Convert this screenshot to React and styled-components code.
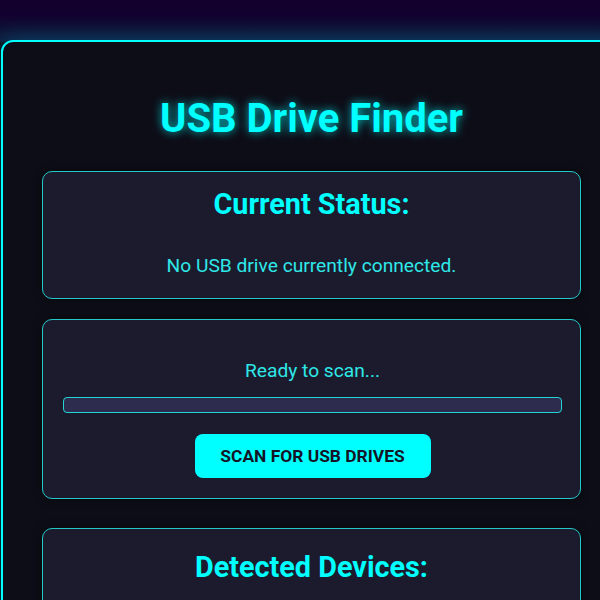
import React from "react";
import styled, { createGlobalStyle } from "styled-components";

const Global = createGlobalStyle`
  html, body {
    margin: 0;
    padding: 0;
    background: #0d0d17;
    font-family: Roboto, "Liberation Sans", sans-serif;
  }
  body { overflow: hidden; }
  * { box-sizing: border-box; }
`;

const Page = styled.div`
  width: 100%;
  min-height: 600px;
  overflow: hidden;
  padding: 40px 0 0 1px;
  background: linear-gradient(180deg, #14002a 0px, #120030 14px, #0e1638 34px, #0c1a3c 42px, #0d0d17 42px);
`;

const Container = styled.main`
  width: 621px;
  min-height: 620px;
  padding: 14px 39px 39px;
  border: 2px solid #00ffff;
  border-radius: 12px;
  background: #0d0d17;
  box-shadow: 0 0 22px rgba(0, 210, 255, 0.25);
`;

const Title = styled.h1`
  margin: 39px 0 29px;
  text-align: center;
  font-size: 40px;
  font-weight: 700;
  line-height: 47px;
  color: #00ffff;
  text-shadow: 0 0 10px rgba(0, 255, 255, 0.75);
`;

const Card = styled.section`
  background: #1c1b2e;
  border: 1px solid #22c9c9;
  border-radius: 10px;
  padding: ${(p) => p.$pad};
  margin-bottom: ${(p) => p.$mb || "20px"};
  display: flex;
  flex-direction: column;
  align-items: center;
  box-shadow: 0 0 8px rgba(0, 0, 0, 0.5);
`;

const CardTitle = styled.h2`
  margin: 0 0 ${(p) => p.$mb || "0"};
  font-size: 28.8px;
  line-height: 34px;
  font-weight: 700;
  color: #00ffff;
`;

const Text = styled.p`
  margin: 0;
  font-size: 19.2px;
  line-height: 22px;
  color: #2ee8e8;
`;

const Progress = styled.div`
  box-sizing: content-box;
  align-self: stretch;
  height: 14px;
  margin: 15px 0 21px;
  border: 1px solid #22d5d5;
  border-radius: 4px;
  background: #2d2b4e;
  overflow: hidden;
`;

const Fill = styled.div`
  height: 100%;
  background: #00ffff;
`;

const ScanButton = styled.button`
  width: 236px;
  height: 44px;
  border: none;
  border-radius: 8px;
  background: #00ffff;
  color: #141426;
  font-family: Roboto, "Liberation Sans", sans-serif;
  font-size: 17.4px;
  font-weight: 700;
  cursor: pointer;
`;

export default function App() {
  const progress = 0;
  return (
    <>
      <Global />
      <Page>
        <Container>
          <Title>USB Drive Finder</Title>
          <Card $pad="15px 20px 21px">
            <CardTitle $mb="34px">Current Status:</CardTitle>
            <Text>No USB drive currently connected.</Text>
          </Card>
          <Card $pad="40px 18px 20px 20px" $mb="29px">
            <Text>Ready to scan...</Text>
            <Progress>
              <Fill style={{ width: `${progress}%` }} />
            </Progress>
            <ScanButton>SCAN FOR USB DRIVES</ScanButton>
          </Card>
          <Card $pad="21px 20px 60px">
            <CardTitle $mb="20px">Detected Devices:</CardTitle>
            <Text>No devices found.</Text>
          </Card>
        </Container>
      </Page>
    </>
  );
}
